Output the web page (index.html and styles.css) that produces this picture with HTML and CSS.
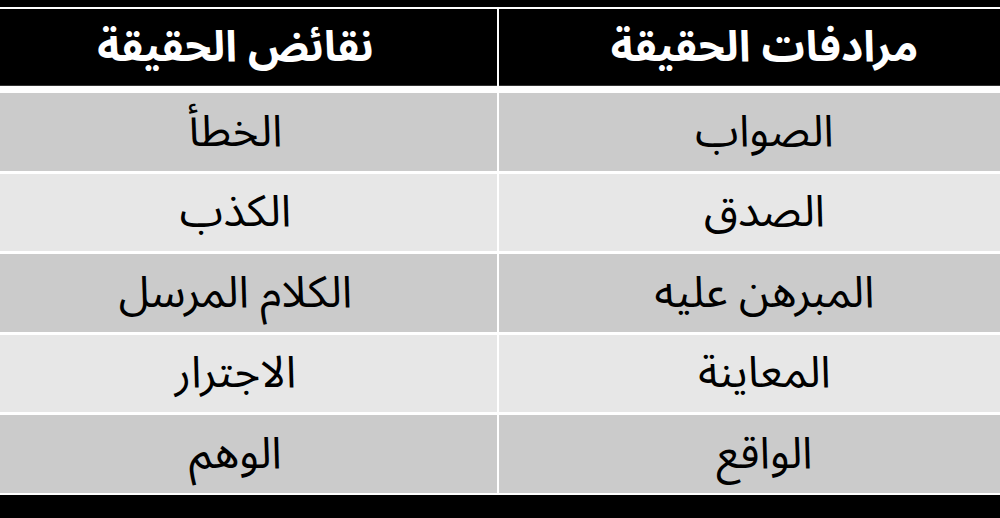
FILE: index.html
```html
<!DOCTYPE html>
<html lang="ar" dir="rtl">
<head>
<meta charset="utf-8">
<link rel="stylesheet" href="styles.css">
</head>
<body>
<div class="table">
  <div class="cell head syn">مرادفات الحقيقة</div>
  <div class="cell head ant">نقائض الحقيقة</div>
  <div class="cell odd syn">الصواب</div>
  <div class="cell odd ant">الخطأ</div>
  <div class="cell even syn">الصدق</div>
  <div class="cell even ant">الكذب</div>
  <div class="cell odd syn">المبرهن عليه</div>
  <div class="cell odd ant">الكلام المرسل</div>
  <div class="cell even syn">المعاينة</div>
  <div class="cell even ant">الاجترار</div>
  <div class="cell odd syn">الواقع</div>
  <div class="cell odd ant">الوهم</div>
</div>
</body>
</html>
```
FILE: styles.css
```css
html, body {
  margin: 0;
  padding: 0;
  background: #000;
  height: 100%;
}
body {
  width: 1000px;
  height: 518px;
  overflow: hidden;
  font-family: "Noto Sans Arabic", "Noto Naskh Arabic", "DejaVu Sans", sans-serif;
}
.table {
  margin-top: 7px;
  padding: 2px 0 2px 0;
  background: #fff;
  display: grid;
  grid-template-columns: 501px 497px;
  grid-template-rows: 81px 77.5px 77.5px 77.5px 77.5px 77.5px;
  column-gap: 2px;
  row-gap: 3px;
}
.cell {
  display: flex;
  align-items: center;
  justify-content: center;
  font-size: 44px;
  color: #000;
  line-height: 1;
}
.head {
  background: #000;
  color: #fff;
  font-weight: bold;
  font-size: 43px;
  margin-bottom: 4px;
  border-bottom: 1px solid #333;
}
.odd { background: #cbcbcb; }
.even { background: #e7e7e7; }
.syn { padding-left: 30px; }
.ant { padding-right: 26px; }
```
